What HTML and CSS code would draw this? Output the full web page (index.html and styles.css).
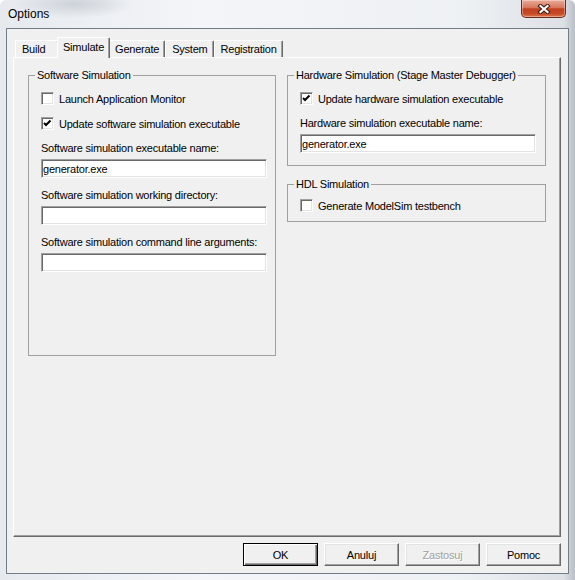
FILE: index.html
```html
<!DOCTYPE html>
<html lang="en">
<head>
    <meta charset="UTF-8">
    <title>Options</title>
    <link rel="stylesheet" href="styles.css">
</head>
<body>
    <div class="window">
        <!-- Title bar with the close button -->
        <div class="titlebar">
            <span class="title">Options</span>
            <span class="close-btn">
                <svg width="14" height="10" viewBox="0 0 14 10">
                    <path d="M3.5 2 L10.5 8 M10.5 2 L3.5 8" stroke="#3b1a12" stroke-width="4.2" stroke-linecap="square"/>
                    <path d="M3.5 2 L10.5 8 M10.5 2 L3.5 8" stroke="#fff" stroke-width="2.2" stroke-linecap="square"/>
                </svg>
            </span>
        </div>

        <div class="client">
            <div class="tabs">
                <span class="tab tab-first">Build</span>
                <span class="tab active">Simulate</span>
                <span class="tab">Generate</span>
                <span class="tab">System</span>
                <span class="tab">Registration</span>
            </div>

            <div class="panel">
                <!-- Left column -->
                <fieldset class="group group-sw">
                    <legend>Software Simulation</legend>
                    <label class="check"><span class="box"></span>Launch Application Monitor</label>
                    <label class="check">
                        <span class="box">
                            <svg width="11" height="11" viewBox="0 0 11 11"><polyline points="2,5 4,7 8.5,2.5" fill="none" stroke="#000" stroke-width="2"/></svg>
                        </span>Update software simulation executable
                    </label>
                    <span class="field-label">Software simulation executable name:</span>
                    <input class="field field-sw" type="text" value="generator.exe">
                    <span class="field-label">Software simulation working directory:</span>
                    <input class="field field-sw" type="text" value="">
                    <span class="field-label">Software simulation command line arguments:</span>
                    <input class="field field-sw" type="text" value="">
                </fieldset>

                <!-- Right column -->
                <div class="col">
                    <fieldset class="group group-hw">
                        <legend>Hardware Simulation (Stage Master Debugger)</legend>
                        <label class="check">
                            <span class="box">
                                <svg width="11" height="11" viewBox="0 0 11 11"><polyline points="2,5 4,7 8.5,2.5" fill="none" stroke="#000" stroke-width="2"/></svg>
                            </span>Update hardware simulation executable
                        </label>
                        <span class="field-label">Hardware simulation executable name:</span>
                        <input class="field field-hw" type="text" value="generator.exe">
                    </fieldset>

                    <fieldset class="group group-hdl">
                        <legend>HDL Simulation</legend>
                        <label class="check"><span class="box"></span>Generate ModelSim testbench</label>
                    </fieldset>
                </div>
            </div>

            <div class="buttons">
                <button class="btn btn-default">OK</button>
                <button class="btn">Anuluj</button>
                <button class="btn" disabled>Zastosuj</button>
                <button class="btn">Pomoc</button>
            </div>
        </div>
    </div>
</body>
</html>
```

FILE: styles.css
```css
/* Dialog styles */
body {
    margin: 0;
    font-family: "Liberation Sans", Arial, sans-serif;
    font-size: 11px;
    letter-spacing: -0.22px;
    color: #000;
    background: #fff;
}

.window {
    width: 575px;
    height: 580px;
    box-sizing: border-box;
    padding: 0 6px 6px 6px;
    border-radius: 6px 6px 0 0;
    background:
        radial-gradient(ellipse 60px 14px at 75px 4px, rgba(150, 158, 168, 0.35), transparent),
        linear-gradient(to right, #e6eaef 0, #f3f5f8 35%, #eef1f4 80%, #dde1e6 98%, #b9bfc6 100%);
}

.titlebar {
    display: flex;
    align-items: flex-start;
    height: 28px;
}

.title {
    padding-left: 2px;
    font-size: 12px;
    letter-spacing: 0;
    line-height: 28px;
}

.close-btn {
    margin-left: auto;
    margin-right: 3px;
    width: 45px;
    height: 18px;
    box-sizing: border-box;
    display: flex;
    align-items: center;
    justify-content: center;
    border: 1px solid #6b2c1e;
    border-top: none;
    border-radius: 0 0 5px 5px;
    background: linear-gradient(to bottom, #e9ab98 0%, #d9765c 45%, #c2401f 52%, #c64a25 80%, #dc7650 100%);
    box-shadow: inset 0 0 0 1px rgba(255, 255, 255, 0.35);
}

.client {
    height: 546px;
    box-sizing: border-box;
    border: 1px solid #737d88;
    background: #f0f0f0;
    padding: 8px 7px 0 6px;
}

/* Tab strip */
.tabs {
    display: flex;
    align-items: flex-end;
    height: 20px;
    padding-left: 2px;
}

.tab {
    height: 17px;
    line-height: 16px;
    box-sizing: border-box;
    padding: 0 5px 0 6px;
    border: 1px solid;
    border-color: #fff #696969 transparent #fff;
    border-bottom: none;
    border-radius: 2px 2px 0 0;
    box-shadow: inset -1px 0 #a0a0a0;
    background: #f0f0f0;
    white-space: nowrap;
}

.tab-first {
    min-width: 44px;
}

.tab.active {
    position: relative;
    z-index: 1;
    height: 21px;
    line-height: 18px;
    margin: 0 -2px -1px;
    padding: 0 5px 0 5px;
}

.panel {
    height: 480px;
    box-sizing: border-box;
    border: 1px solid;
    border-color: #fff #696969 #696969 #fff;
    box-shadow: inset -1px -1px #a0a0a0;
    display: grid;
    grid-template-columns: 248px 259px;
    column-gap: 11px;
    align-items: start;
    padding: 11px 0 0 14px;
}

.col {
    display: flex;
    flex-direction: column;
    gap: 12px;
}

/* Group boxes */
.group {
    margin: 0;
    min-width: 0;
    box-sizing: border-box;
    border: 1px solid #a0a0a0;
    padding: 10px 10px 12px 12px;
}

.group legend {
    padding: 0 2px;
    margin-left: -6px;
    line-height: 13px;
    white-space: nowrap;
}

.group-sw {
    height: 287px;
}

.group-hdl {
    padding-top: 8px;
    padding-bottom: 9px;
}

.check {
    display: flex;
    align-items: center;
    gap: 5px;
    height: 13px;
    margin-bottom: 12px;
    white-space: nowrap;
}

.group-hdl .check {
    margin-bottom: 0;
}

.box {
    width: 13px;
    height: 13px;
    box-sizing: border-box;
    flex: none;
    background: #fff;
    border: 1px solid;
    border-color: #a0a0a0 #fff #fff #a0a0a0;
    box-shadow: inset 1px 1px #696969, inset -1px -1px #e3e3e3;
}

.box svg {
    display: block;
}

.field-label {
    display: block;
    line-height: 13px;
    margin-bottom: 4px;
    white-space: nowrap;
}

.field {
    display: block;
    height: 19px;
    box-sizing: border-box;
    margin: 0 0 11px;
    padding: 0 1px;
    font-family: inherit;
    font-size: 11px;
    letter-spacing: -0.22px;
    color: #000;
    background: #fff;
    border: 1px solid;
    border-color: #a0a0a0 #fff #fff #a0a0a0;
    box-shadow: inset 1px 1px #696969, inset -1px -1px #e3e3e3;
    outline: none;
}

.field-sw {
    width: 226px;
}

.field-hw {
    width: 236px;
    margin: 0;
}

/* Bottom buttons */
.buttons {
    display: flex;
    justify-content: flex-end;
    gap: 6px;
    margin-top: 6px;
    width: 548px;
}

.btn {
    width: 75px;
    height: 23px;
    box-sizing: border-box;
    padding: 0;
    font-family: inherit;
    font-size: 11px;
    font-weight: normal;
    letter-spacing: -0.22px;
    color: #000;
    background: #f0f0f0;
    border: 1px solid;
    border-color: #fff #696969 #696969 #fff;
    box-shadow: inset -1px -1px #a0a0a0, inset 1px 1px #e3e3e3;
}

.btn-default {
    border-color: #000;
    box-shadow: inset 1px 1px #fff, inset -1px -1px #696969, inset -2px -2px #a0a0a0;
}

.btn:disabled {
    color: #a0a0a0;
    text-shadow: 1px 1px #fff;
}
```
